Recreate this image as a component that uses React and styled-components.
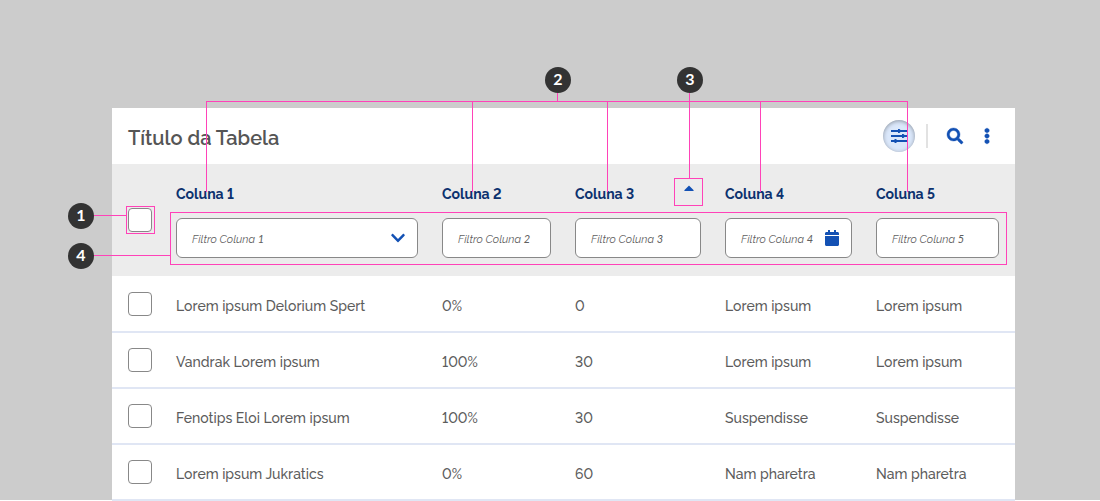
import React from "react";
import styled, { createGlobalStyle } from "styled-components";
import { FaSearch, FaEllipsisV, FaChevronDown, FaCalendar, FaCaretUp } from "react-icons/fa";

const BLUE = "#1351b4";
const NAVY = "#0c326f";
const PINK = "#ff42b8";
const COLUMNS = "24px 242px 109px 126px 127px 123px";

const GlobalStyle = createGlobalStyle`
  *, *::before, *::after { box-sizing: border-box; }
  body {
    margin: 0;
    background: #fff;
    font-family: Raleway, Lato, "Open Sans", sans-serif;
    font-variant-numeric: lining-nums;
    color: #555;
    overflow: hidden;
  }
`;

const Stage = styled.main`
  position: relative;
  width: 1100px;
  height: 501px;
  padding: 108px 85px 0 112px;
  overflow: hidden;
  background: linear-gradient(#ccc 500px, #fff 500px);
`;

const Card = styled.section`
  height: 393px;
  background: #fff;
`;

const TitleBar = styled.header`
  display: flex;
  align-items: center;
  justify-content: space-between;
  height: 56px;
  padding: 0 16px;
`;

const Title = styled.h1`
  margin: 4px 0 0;
  font-size: 20px;
  line-height: 28px;
  font-weight: 600;
`;

const Actions = styled.div`
  display: flex;
  align-items: center;
  color: ${BLUE};
`;

const DensityButton = styled.button`
  display: grid;
  place-items: center;
  width: 32px;
  height: 32px;
  margin-right: 11px;
  padding: 0;
  border: 0;
  border-radius: 50%;
  background: #dbe8fb;
  color: ${BLUE};
  box-shadow: inset 0 1px 4px rgba(0, 0, 0, 0.36);
`;

const Divider = styled.span`
  width: 2px;
  height: 24px;
  margin-right: 11px;
  background: #e2e2e2;
`;

const IconButton = styled.button`
  display: grid;
  place-items: center;
  width: 32px;
  height: 32px;
  padding: 0;
  border: 0;
  background: none;
  color: ${BLUE};
  font-size: 16px;

  &:last-child { margin-right: -4px; }

  svg {
    overflow: visible;
    stroke: currentColor;
    stroke-width: 12px;
  }
`;

const TableHead = styled.div`
  display: grid;
  grid-template-columns: ${COLUMNS};
  column-gap: 24px;
  height: 112px;
  padding: 18px 16px;
  background: #ececec;
`;

const Checkbox = styled.span`
  width: 24px;
  height: 24px;
  border: 1px solid #888;
  border-radius: 4px;
  background: #fff;
`;

const HeadCheckbox = styled(Checkbox)`
  margin-top: 26px;
`;

const HeadCell = styled.div`
  display: flex;
  flex-direction: column;
  gap: 12px;
`;

const HeadLabel = styled.div`
  display: flex;
  justify-content: space-between;
  height: 24px;
  color: ${NAVY};
  font-size: 14px;
  line-height: 24px;
  font-weight: 700;
`;

const SortIcon = styled(FaCaretUp)`
  margin: -2px 4px 0 0;
  color: ${BLUE};
  font-size: 16px;
`;

const FilterField = styled.div`
  display: flex;
  align-items: center;
  justify-content: space-between;
  height: 40px;
  padding: 0 11px 0 15px;
  border: 1px solid #888;
  border-radius: 6px;
  background: #fff;
  color: ${BLUE};
  font-size: 16px;
`;

const Placeholder = styled.span`
  padding-top: 2px;
  color: #606060;
  font-size: 11px;
  font-style: italic;
  font-weight: 400;
  white-space: nowrap;
`;

const Digit = styled.span`
  font-family: Lato, sans-serif;
  font-weight: 400;
`;

const Row = styled.div`
  display: grid;
  grid-template-columns: ${COLUMNS};
  column-gap: 24px;
  align-items: center;
  height: 56px;
  padding: 0 16px;
  border-bottom: 2px solid #e0e6f4;
`;

const Body = styled.div`
  padding-top: 1px;
`;

const Cell = styled.span`
  padding-top: 4px;
  color: #5c5c5c;
  font-size: 14px;
  line-height: 20px;
  font-weight: 500;
  white-space: nowrap;
`;

const Badge = styled.span`
  position: absolute;
  left: ${({ $x }) => $x}px;
  top: ${({ $y }) => $y}px;
  width: 26px;
  height: 26px;
  border-radius: 50%;
  background: #333;
  color: #fff;
  font-family: Lato, sans-serif;
  font-size: 16px;
  line-height: 24px;
  font-weight: 700;
  text-align: center;
`;

const HLine = styled.i`
  position: absolute;
  left: ${({ $x }) => $x}px;
  top: ${({ $y }) => $y}px;
  width: ${({ $length }) => $length}px;
  height: 1px;
  background: ${PINK};
`;

const VLine = styled.i`
  position: absolute;
  left: ${({ $x }) => $x}px;
  top: ${({ $y }) => $y}px;
  width: 1px;
  height: ${({ $length }) => $length}px;
  background: ${PINK};
`;

const Outline = styled.i`
  position: absolute;
  left: ${({ $x }) => $x}px;
  top: ${({ $y }) => $y}px;
  width: ${({ $w }) => $w}px;
  height: ${({ $h }) => $h}px;
  border: 1px solid ${PINK};
`;

const DensityIcon = () => (
  <svg width="18" height="16" viewBox="0 0 18 16" fill="currentColor" aria-hidden="true">
    <path d="M1 2h17v2H1zM1 7h17v2H1zM1 12h17v2H1z" />
    <path d="M8 1h1.500l2 2-2 2H8zM12 6h1.500l2 2-2 2H12zM6.500 11H5l-2 2 2 2h1.500z" />
  </svg>
);

const columns = [
  { number: 1, icon: <FaChevronDown /> },
  { number: 2 },
  { number: 3, sorted: true },
  { number: 4, icon: <FaCalendar /> },
  { number: 5 },
];

const rows = [
  ["Lorem ipsum Delorium Spert", "0%", "0", "Lorem ipsum", "Lorem ipsum"],
  ["Vandrak Lorem ipsum", "100%", "30", "Lorem ipsum", "Lorem ipsum"],
  ["Fenotips Eloi Lorem ipsum", "100%", "30", "Suspendisse", "Suspendisse"],
  ["Lorem ipsum Jukratics", "0%", "60", "Nam pharetra", "Nam pharetra"],
];

const columnPointers = [206, 472, 607, 760, 907];

export default function App() {
  return (
    <>
      <GlobalStyle />
      <Stage>
        <Card>
          <TitleBar>
            <Title>Título da Tabela</Title>
            <Actions>
              <DensityButton aria-label="Densidade"><DensityIcon /></DensityButton>
              <Divider />
              <IconButton aria-label="Buscar"><FaSearch /></IconButton>
              <IconButton aria-label="Mais opções"><FaEllipsisV /></IconButton>
            </Actions>
          </TitleBar>
          <TableHead>
            <HeadCheckbox />
            {columns.map((c) => (
              <HeadCell key={c.number}>
                <HeadLabel>
                  {`Coluna ${c.number}`}
                  {c.sorted && <SortIcon />}
                </HeadLabel>
                <FilterField>
                  <Placeholder>Filtro Coluna <Digit>{c.number}</Digit></Placeholder>
                  {c.icon}
                </FilterField>
              </HeadCell>
            ))}
          </TableHead>
          <Body>
            {rows.map((r) => (
              <Row key={r[0]}>
                <Checkbox />
                {r.map((text, i) => (
                  <Cell key={i}>{text}</Cell>
                ))}
              </Row>
            ))}
          </Body>
        </Card>

        <HLine $x={206} $y={101} $length={702} />
        {columnPointers.map((x) => <VLine key={x} $x={x} $y={101} $length={91} />)}
        <VLine $x={557} $y={93} $length={8} />
        <VLine $x={689} $y={93} $length={86} />
        <HLine $x={94} $y={215} $length={32} />
        <HLine $x={94} $y={255} $length={76} />
        <Outline $x={126} $y={206} $w={29} $h={28} />
        <Outline $x={674} $y={178} $w={29} $h={28} />
        <Outline $x={170} $y={212} $w={837} $h={53} />
        <Badge $x={68} $y={203}>1</Badge>
        <Badge $x={545} $y={67}>2</Badge>
        <Badge $x={677} $y={67}>3</Badge>
        <Badge $x={68} $y={243}>4</Badge>
      </Stage>
    </>
  );
}
